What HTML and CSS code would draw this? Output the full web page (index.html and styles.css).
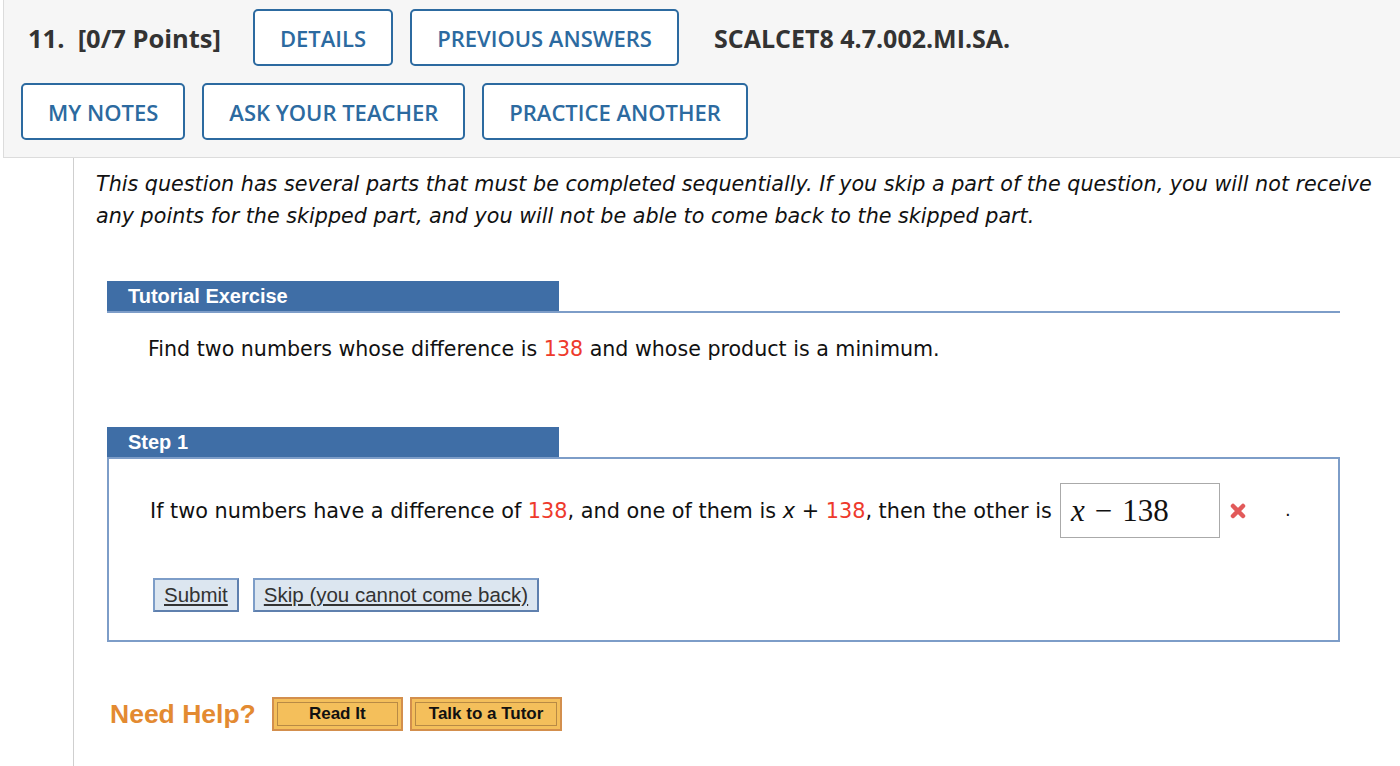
FILE: index.html
```html
<!DOCTYPE html>
<html>
<head>
<meta charset="utf-8">
<link rel="stylesheet" href="styles.css">
</head>
<body>
<div class="qhead">
  <div class="qrow">
    <span class="qnum">11.&nbsp; [0/7 Points]</span>
    <button class="hbtn">DETAILS</button>
    <button class="hbtn">PREVIOUS ANSWERS</button>
    <span class="qcode">SCALCET8 4.7.002.MI.SA.</span>
  </div>
  <div class="qrow row2">
    <button class="hbtn">MY NOTES</button>
    <button class="hbtn">ASK YOUR TEACHER</button>
    <button class="hbtn">PRACTICE ANOTHER</button>
  </div>
</div>
<div class="qbody">
  <p class="intro">This question has several parts that must be completed sequentially. If you skip a part of the question, you will not receive any points for the skipped part, and you will not be able to come back to the skipped part.</p>

  <div class="section">
    <div class="sechead"><div class="sectitle">Tutorial Exercise</div></div>
    <p class="problem">Find two numbers whose difference is <span class="red">138</span> and whose product is a minimum.</p>
  </div>

  <div class="section step">
    <div class="sechead nobar"><div class="sectitle">Step 1</div></div>
    <div class="stepbox">
      <div class="stepline">
        <span>If two numbers have a difference of <span class="red">138</span>, and one of them is <i>x</i> + <span class="red">138</span>, then the other is</span>
        <span class="answer"><i>x</i><span class="minus">−</span>138</span>
        <svg class="wrong" width="18" height="18" viewBox="0 0 18 18"><path d="M4 4 L14 14 M14 4 L4 14" stroke="#e25a5a" stroke-width="4.5" stroke-linecap="round"/></svg>
        <span class="dot">.</span>
      </div>
      <div class="actions">
        <button class="sbtn">Submit</button>
        <button class="sbtn">Skip (you cannot come back)</button>
      </div>
    </div>
  </div>

  <div class="help">
    <span class="needhelp">Need Help?</span>
    <button class="obtn read">Read It</button>
    <button class="obtn">Talk to a Tutor</button>
  </div>
</div>
</body>
</html>
```

FILE: styles.css
```css
html, body {
  margin: 0;
  padding: 0;
  background: #ffffff;
}
body {
  font-family: "Open Sans", sans-serif;
  color: #333;
}
.qhead {
  margin-left: 3px;
  background: #f6f6f6;
  border: 1px solid #dcdcdc;
  border-top: none;
  border-right: none;
  padding: 9px 0 17px 17px;
}
.qrow {
  display: flex;
  align-items: center;
  height: 57px;
}
.row2 {
  margin-top: 17px;
}
.qnum {
  font-weight: 700;
  font-size: 25.5px;
  color: #333;
  margin-left: 7px;
  margin-right: 32px;
}
.qcode {
  font-weight: 700;
  font-size: 25px;
  color: #333;
  margin-left: 18px;
}
.hbtn {
  height: 57px;
  box-sizing: border-box;
  border: 2px solid #2c6aa0;
  border-radius: 5px;
  background: #ffffff;
  color: #2c6aa0;
  font-family: "Open Sans", sans-serif;
  font-weight: 600;
  font-size: 22px;
  padding: 0 25px;
  margin-right: 17px;
}
.qbody {
  margin-left: 73px;
  border-left: 1px solid #cfcfcf;
  padding: 10px 0 0 0;
  height: 609px;
  box-sizing: border-box;
}
.intro {
  margin: 0 10px 0 22px;
  font-family: "DejaVu Sans", Verdana, sans-serif;
  font-style: italic;
  font-size: 20.7px;
  line-height: 32px;
  color: #111;
}
.section {
  margin-left: 33px;
  margin-right: 60px;
  margin-top: 49px;
}
.sechead {
  border-bottom: 2px solid #7d9dc8;
  display: flex;
}
.sechead.nobar {
  border-bottom: none;
}
.sectitle {
  width: 452px;
  height: 30px;
  box-sizing: border-box;
  background: #3f6ea6;
  color: #fff;
  font-family: "Liberation Sans", Arial, sans-serif;
  font-weight: bold;
  font-size: 20px;
  line-height: 30px;
  padding-left: 21px;
}
.problem {
  margin: 23px 0 0 41px;
  font-family: "DejaVu Sans", Verdana, sans-serif;
  font-size: 20.6px;
  line-height: 26px;
  color: #111;
}
.step {
  margin-top: 65px;
}
.stepbox {
  border: 2px solid #7d9dc8;
  height: 185px;
  box-sizing: border-box;
  padding: 24px 0 0 41px;
}
.stepline {
  display: flex;
  align-items: center;
  font-family: "DejaVu Sans", Verdana, sans-serif;
  font-size: 20.8px;
  color: #111;
}
.red {
  color: #ee3a2c;
}
.answer {
  display: inline-flex;
  align-items: center;
  width: 160px;
  height: 55px;
  box-sizing: border-box;
  border: 1.5px solid #aaa;
  margin-left: 8px;
  padding-left: 10px;
  font-family: "Liberation Serif", "DejaVu Serif", serif;
  font-size: 31px;
  color: #111;
}
.minus {
  margin: 0 10px 0 10px;
}
.wrong {
  margin-left: 9px;
}
.dot {
  margin-left: 38px;
  font-size: 18px;
  position: relative;
  top: -1px;
}
.actions {
  display: flex;
  gap: 14px;
  margin-top: 40px;
  margin-left: 3px;
}
.sbtn {
  height: 34px;
  box-sizing: border-box;
  background: #dce6f0;
  border: 2px solid #7d9dc8;
  border-right-color: #5f80ae;
  border-bottom-color: #5f80ae;
  font-family: "Liberation Sans", Arial, sans-serif;
  font-size: 20.5px;
  color: #333;
  text-decoration: underline;
  padding: 0 9px;
}
.help {
  display: flex;
  align-items: center;
  margin: 55px 0 0 36px;
}
.needhelp {
  font-family: "Liberation Sans", Arial, sans-serif;
  font-weight: bold;
  font-size: 26.5px;
  color: #e38a31;
  margin-right: 16px;
}
.obtn {
  height: 34px;
  box-sizing: border-box;
  background: #f4bf5b;
  border: 2px solid #d38f4d;
  box-shadow: inset 0 0 0 3px #f4bf5b, inset 0 0 0 4px #b88a45;
  font-family: "Liberation Sans", Arial, sans-serif;
  font-weight: bold;
  font-size: 17px;
  color: #111;
  padding: 0 17px;
  margin-right: 7px;
}
.obtn.read {
  width: 131px;
}
```
